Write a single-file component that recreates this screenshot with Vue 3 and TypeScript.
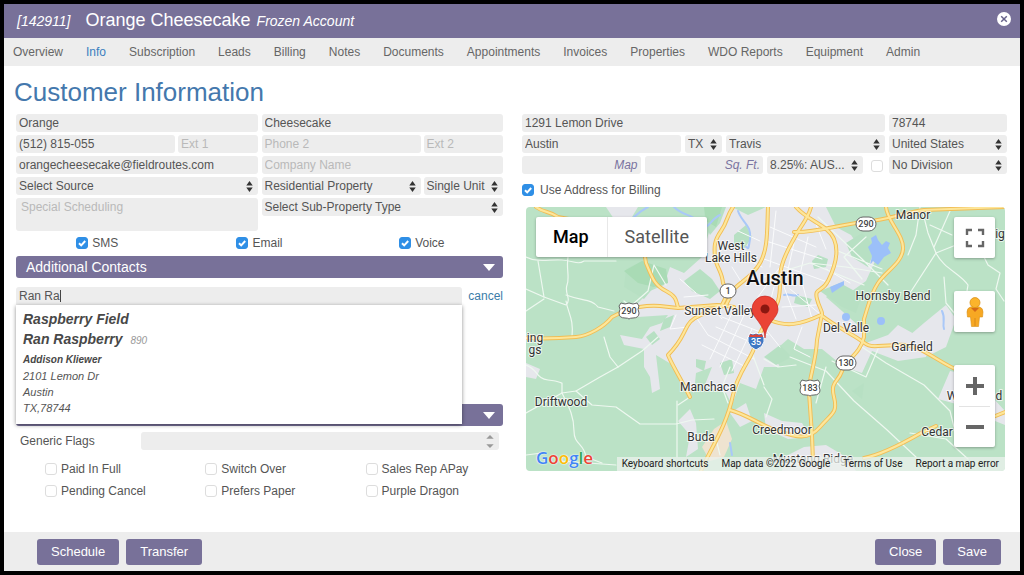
<script setup lang="ts">
import { ref } from 'vue'

interface Flag {
  id: string
  label: string
  checked: boolean
}

interface MapLabel {
  text: string
  x: number
  y: number
}

interface Shield {
  text: string
  x: number
  y: number
  kind: 'us' | 'state'
}

const tabs: string[] = [
  'Overview', 'Info', 'Subscription', 'Leads', 'Billing', 'Notes', 'Documents',
  'Appointments', 'Invoices', 'Properties', 'WDO Reports', 'Equipment', 'Admin',
]
const activeTab = ref('Info')

const channels = ref<Flag[]>([
  { id: 'sms', label: 'SMS', checked: true },
  { id: 'email', label: 'Email', checked: true },
  { id: 'voice', label: 'Voice', checked: true },
])

const flags = ref<Flag[]>([
  { id: 'paid', label: 'Paid In Full', checked: false },
  { id: 'switch', label: 'Switch Over', checked: false },
  { id: 'apay', label: 'Sales Rep APay', checked: false },
  { id: 'pending', label: 'Pending Cancel', checked: false },
  { id: 'paper', label: 'Prefers Paper', checked: false },
  { id: 'dragon', label: 'Purple Dragon', checked: false },
])

const search = ref('Ran Ra')
const taxable = ref(false)
const billing = ref(true)

const urban: string[] = [
  'M144 60 L158 66 L176 50 L190 0 L206 0 L222 8 L240 0 L300 0 L310 20 L325 28 L336 44 L350 52 L340 74 L326 84 L312 78 L300 90 L316 104 L334 120 L340 136 L362 128 L372 118 L390 128 L404 134 L400 150 L372 154 L346 144 L336 166 L318 160 L296 142 L278 142 L262 132 L246 146 L254 160 L238 160 L230 182 L214 176 L206 198 L200 186 L178 180 L186 160 L170 166 L168 186 L158 176 L150 160 L130 148 L134 182 L126 186 L124 170 L118 160 L118 142 L98 138 L94 128 L116 132 L124 120 L136 116 L142 108 L112 110 L108 100 L124 84 L138 78 Z',
  'M0 156 L14 162 L10 172 L0 170 Z',
  'M424 164 L446 168 L479 204 L479 218 L454 208 L434 198 L412 192 Z',
  'M384 128 L398 116 L420 98 L430 112 L420 140 L404 148 L376 152 Z',
  'M152 214 L164 202 L170 216 L172 242 L160 250 L164 228 Z',
  'M238 206 L256 214 L276 216 L284 230 L262 232 L240 222 Z',
  'M258 250 L278 240 L300 238 L320 250 L330 264 L256 264 Z',
  'M204 206 L220 196 L226 214 L214 220 Z',
  'M80 0 L112 0 L106 10 L88 12 Z',
]

const parks: string[] = [
  'M100 62 L116 54 L140 62 L142 76 L128 80 L118 92 L98 80 Z',
  'M158 74 L174 62 L186 72 L194 84 L184 92 L166 84 Z',
  'M178 0 L200 0 L194 16 L184 28 L178 14 Z',
  'M208 28 L220 18 L226 30 L218 42 L208 40 Z',
  'M320 36 L336 26 L350 40 L342 60 L326 50 Z',
  'M294 84 L314 76 L336 88 L330 106 L316 100 Z',
  'M120 130 L128 124 L134 132 L126 138 Z',
  'M170 152 L180 154 L178 164 L170 160 Z',
  'M194 156 L206 152 L208 166 L198 168 Z',
  'M238 150 L254 138 L266 150 L250 158 Z',
  'M270 88 L286 92 L282 100 L268 96 Z',
  'M138 112 L148 108 L144 120 L134 124 Z',
  'M286 54 L292 48 L302 52 L300 60 L288 62 Z',
  'M326 184 L338 176 L336 192 Z',
]

const water: string[] = [
  'M342 40 L346 36 L345 31 L350 28 L352 33 L356 38 L360 34 L364 36 L362 41 L365 46 L358 50 L352 58 L347 54 L344 58 L346 49 Z',
  'M316 110 a4 4 0 1 0 8 0 a4 4 0 1 0 -8 0',
  'M351 114 a4 4 0 1 0 8 0 a4 4 0 1 0 -8 0',
  'M304 80 L318 74 L318 78 L306 86 Z',
]

const rivers: string[] = [
  'M108 10 C114 4 118 2 122 0',
  'M148 0 C158 10 166 6 174 16 S184 12 194 8',
  'M212 4 C216 16 226 18 224 32 S222 40 220 40',
  'M258 88 C264 86 266 90 272 88',
  'M416 104 C420 112 416 116 418 122',
  'M204 236 L206 248',
]

const minor: string[] = [
  'M0 50 C12 56 24 52 36 53 S52 58 58 54 L90 54',
  'M42 50 C40 62 44 70 41 78 S46 92 40 98 L18 90 L0 82',
  'M18 90 L12 54', 'M40 88 C56 94 66 92 72 100 L88 104',
  'M40 94 C42 106 48 112 46 130', 'M0 104 L18 92',
  'M0 158 C12 162 10 172 22 173 S34 176 36 176 L36 186 L0 206',
  'M36 186 L50 184 L74 170 L92 160 L116 144 L132 130',
  'M78 130 L84 150 L92 160', 'M50 184 L66 198 L90 200 L114 217 L150 217 L166 213 L188 212',
  'M36 186 C44 202 48 210 48 224 S58 236 60 250 L76 256',
  'M151 194 L151 250', 'M164 190 L152 198', 'M168 230 L190 232 L194 248',
  'M106 98 L122 84 L128 58 L140 78', 'M98 94 L112 106',
  'M0 248 L16 246 M34 254 L90 258',
  'M394 0 L390 28 L382 48 M396 2 L402 26 L410 46 L384 86',
  'M410 46 C418 62 434 66 442 78 L440 90', 'M404 18 L426 28 M410 46 L430 38',
  'M424 4 L408 40', 'M454 42 L462 58 L474 66 L470 82 L478 94',
  'M238 70 L284 56 L320 60 L356 66 M284 56 L338 78',
  'M292 10 L336 52 L362 78 M312 44 L356 62', 'M340 30 L318 50 L336 72',
  'M336 140 L360 156 L398 178 L424 204 L428 220',
  'M264 150 L300 164 L328 194 L360 222 L390 250', 'M352 142 L340 170 L306 154',
  'M300 160 L290 196', 'M238 152 L252 160 L270 158 M238 180 L246 192 L240 210',
  'M226 146 L238 178 M204 160 L196 180 L202 196',
  'M384 226 L420 232 L442 252', 'M418 70 L420 96 L440 120',
]

const streets: string[] = [
  'M196 110 L242 128', 'M190 120 L236 140', 'M182 128 L228 152', 'M176 138 L220 160',
  'M206 106 L184 152', 'M218 108 L194 160', 'M226 122 L206 164',
  'M244 20 L290 40', 'M240 34 L296 52', 'M238 52 L304 76', 'M250 4 L244 60',
  'M268 36 L258 80 L270 112', 'M282 30 L274 68 L286 112', 'M256 100 L290 98',
  'M232 90 L254 60', 'M216 50 L236 60', 'M206 60 L216 76 L196 96', 'M212 24 L234 34',
  'M158 90 L182 88 M154 72 L170 86', 'M288 12 L300 42', 'M300 62 L324 76',
  'M264 82 L300 112', 'M248 80 L238 120 L254 140', 'M276 120 L268 142 L284 150',
  'M150 108 L144 122 L162 120', 'M166 104 L182 128 M186 100 L196 112',
]

const highways: string[] = [
  'M10 0 C18 6 24 4 32 10 L96 22 L118 44 L120 56 C126 70 128 78 140 84 S150 96 152 100',
  'M0 131 C20 132 38 131 50 130 S78 120 86 110 L98 104 C110 100 122 98 134 99 L152 101 L191 98 L208 100',
  'M193 98 C180 108 168 108 162 118 S156 134 142 148 C146 158 154 170 164 190',
  'M207 0 C200 10 202 14 195 24 S188 40 189 50 S196 64 197 76 L202 86 L196 98',
  'M242 0 C241 24 242 42 234 56 S218 72 208 82 L200 98 L184 104',
  'M268 25 C290 26 310 18 338 15 S376 6 398 3 L479 0',
  'M270 0 C282 14 302 18 308 32 S308 62 302 74 S288 80 291 92 S298 104 295 112 L291 133 C290 156 282 174 283 185 L286 228 L287 256',
  'M360 0 C361 14 378 28 377 42 S360 64 352 76 S342 100 338 112 L338 130 C334 148 320 152 316 164 S304 174 308 190 S306 206 294 220 S270 230 252 224 S222 208 204 203',
  'M244 113 C260 120 274 118 295 108 C308 118 320 124 328 129 C340 136 340 140 352 139 L372 138 C394 136 412 156 434 164',
  'M338 251 C354 248 374 238 395 226 L410 219', 'M462 212 L479 205',
  'M285 0 C282 12 274 20 270 28 S260 44 256 58 S256 80 252 94 S234 120 230 136 S212 164 207 188 S192 230 181 251 L175 264',
]

const labels: MapLabel[] = [
  { text: 'Manor', x: 387, y: 12 },
  { text: 'West', x: 205, y: 43 },
  { text: 'Lake Hills', x: 205, y: 55 },
  { text: 'Hornsby Bend', x: 367, y: 93 },
  { text: 'Sunset Valley', x: 194, y: 108 },
  { text: 'Del Valle', x: 320, y: 125 },
  { text: 'Garfield', x: 386, y: 144 },
  { text: 'Manchaca', x: 182, y: 184 },
  { text: 'Driftwood', x: 35, y: 199 },
  { text: 'Creedmoor', x: 256, y: 227 },
  { text: 'Buda', x: 175, y: 234 },
  { text: 'Cedar', x: 411, y: 229 },
  { text: 'Mustang Ridge', x: 287, y: 256 },
  { text: 'ing', x: 9, y: 135 },
  { text: 'gs', x: 9, y: 147 },
  { text: 'ig', x: 474, y: 31 },
  { text: 'W', x: 426, y: 193 },
  { text: 'd', x: 473, y: 193 },
]

const shields: Shield[] = [
  { text: '290', x: 103, y: 104, kind: 'us' },
  { text: '183', x: 284, y: 181, kind: 'us' },
  { text: '290', x: 340, y: 17, kind: 'state' },
  { text: '130', x: 320, y: 156, kind: 'state' },
  { text: '1', x: 202, y: 84, kind: 'state' },
]

const arrows = 'M0 5 L3.5 0 L7 5 Z M0 7 L3.5 12 L7 7 Z'
</script>

<template>
  <div class="window">
    <header class="title-bar">
      <span class="account">[142911]</span>
      <span class="name">Orange Cheesecake</span>
      <span class="account status">Frozen Account</span>
      <button class="close" type="button" aria-label="Close window">
        <svg viewBox="0 0 14 14" width="14" height="14">
          <circle cx="7" cy="7" r="7" fill="#fff" />
          <path d="M4.2 4.2 L9.8 9.8 M9.8 4.2 L4.2 9.8" stroke="#66628a" stroke-width="1.5" />
        </svg>
      </button>
    </header>

    <nav class="tabs">
      <a
        v-for="tab in tabs" :key="tab" href="#" :class="{ active: tab === activeTab }"
        @click.prevent="activeTab = tab"
      >{{ tab }}</a>
    </nav>

    <main class="content">
      <h1>Customer Information</h1>
      <div class="columns">
        <section class="customer">
          <div class="halves">
            <div class="stack">
              <input class="field" aria-label="First name" value="Orange">
              <div class="phone">
                <input class="field" aria-label="Phone 1" value="(512) 815-055">
                <input class="field" aria-label="Extension 1" placeholder="Ext 1">
              </div>
              <input class="field" aria-label="Email address" value="orangecheesecake@fieldroutes.com">
              <div class="pick">
                <select class="field" aria-label="Source"><option>Select Source</option></select>
                <svg class="arrows" viewBox="0 0 7 12"><path :d="arrows" /></svg>
              </div>
              <textarea class="field notes" aria-label="Special scheduling" placeholder="Special Scheduling"></textarea>
            </div>
            <div class="stack">
              <input class="field" aria-label="Last name" value="Cheesecake">
              <div class="phone">
                <input class="field" aria-label="Phone 2" placeholder="Phone 2">
                <input class="field" aria-label="Extension 2" placeholder="Ext 2">
              </div>
              <input class="field" aria-label="Company name" placeholder="Company Name">
              <div class="phone">
                <div class="pick">
                  <select class="field" aria-label="Property type"><option>Residential Property</option></select>
                  <svg class="arrows" viewBox="0 0 7 12"><path :d="arrows" /></svg>
                </div>
                <div class="pick">
                  <select class="field" aria-label="Units"><option>Single Unit</option></select>
                  <svg class="arrows" viewBox="0 0 7 12"><path :d="arrows" /></svg>
                </div>
              </div>
              <div class="pick">
                <select class="field" aria-label="Sub-property type"><option>Select Sub-Property Type</option></select>
                <svg class="arrows" viewBox="0 0 7 12"><path :d="arrows" /></svg>
              </div>
            </div>
          </div>

          <div class="channels">
            <label v-for="channel in channels" :key="channel.id" class="tick">
              <span class="box">
                <input v-model="channel.checked" type="checkbox">
                <svg viewBox="0 0 12 12"><path d="M3 6.2 L5.2 8.4 L9.2 4" /></svg>
              </span>
              {{ channel.label }}
            </label>
          </div>

          <button class="bar" type="button">
            Additional Contacts
            <svg viewBox="0 0 12 7" width="12" height="7"><path d="M0 0 H12 L6 7 Z" fill="#fff" /></svg>
          </button>

          <div class="contacts">
            <div class="search-row">
              <div class="search">
                <input v-model="search" class="field" aria-label="Search contacts">
                <span class="caret"></span>
                <a href="#" class="result" @click.prevent>
                  <strong>Raspberry Field</strong>
                  <strong>Ran Raspberry <small>890</small></strong>
                  <b>Addison Kliewer</b>
                  <span>2101 Lemon Dr</span>
                  <span>Austin</span>
                  <span>TX,78744</span>
                </a>
              </div>
              <a href="#" class="cancel" @click.prevent>cancel</a>
            </div>
          </div>

          <button class="bar" type="button" aria-label="Flags">
            <span></span>
            <svg viewBox="0 0 12 7" width="12" height="7"><path d="M0 0 H12 L6 7 Z" fill="#fff" /></svg>
          </button>

          <div class="generic">
            <label for="generic-flags">Generic Flags</label>
            <div class="pick">
              <select id="generic-flags" class="field"><option></option></select>
              <svg class="arrows pale" viewBox="0 0 8 14"><path d="M0 4 L4 0 L8 4 Z M0 10 L4 14 L8 10 Z" /></svg>
            </div>
          </div>

          <div class="flags">
            <label v-for="flag in flags" :key="flag.id" class="tick">
              <span class="box">
                <input v-model="flag.checked" type="checkbox">
                <svg viewBox="0 0 12 12"><path d="M3 6.2 L5.2 8.4 L9.2 4" /></svg>
              </span>
              {{ flag.label }}
            </label>
          </div>
        </section>

        <section class="address">
          <div class="stack">
            <div class="line street">
              <input class="field" aria-label="Street" value="1291 Lemon Drive">
              <input class="field" aria-label="Zip" value="78744">
            </div>
            <div class="line city">
              <input class="field" aria-label="City" value="Austin">
              <div class="pick">
                <select class="field" aria-label="State"><option>TX</option></select>
                <svg class="arrows" viewBox="0 0 7 12"><path :d="arrows" /></svg>
              </div>
              <div class="pick">
                <select class="field" aria-label="County"><option>Travis</option></select>
                <svg class="arrows" viewBox="0 0 7 12"><path :d="arrows" /></svg>
              </div>
              <div class="pick">
                <select class="field" aria-label="Country"><option>United States</option></select>
                <svg class="arrows" viewBox="0 0 7 12"><path :d="arrows" /></svg>
              </div>
            </div>
            <div class="line lot">
              <input class="field hint" aria-label="Map code" placeholder="Map">
              <input class="field hint" aria-label="Square feet" placeholder="Sq. Ft.">
              <div class="pick">
                <select class="field" aria-label="Tax rate"><option>8.25%: AUS...</option></select>
                <svg class="arrows" viewBox="0 0 7 12"><path :d="arrows" /></svg>
              </div>
              <span class="box">
                <input v-model="taxable" type="checkbox" aria-label="Tax exempt">
                <svg viewBox="0 0 12 12"><path d="M3 6.2 L5.2 8.4 L9.2 4" /></svg>
              </span>
              <div class="pick">
                <select class="field" aria-label="Division"><option>No Division</option></select>
                <svg class="arrows" viewBox="0 0 7 12"><path :d="arrows" /></svg>
              </div>
            </div>
          </div>
          <label class="tick billing">
            <span class="box">
              <input v-model="billing" type="checkbox">
              <svg viewBox="0 0 12 12"><path d="M3 6.2 L5.2 8.4 L9.2 4" /></svg>
            </span>
            Use Address for Billing
          </label>

          <div class="map">
            <svg class="terrain" viewBox="0 0 479 264" preserveAspectRatio="xMidYMid slice">
              <rect width="479" height="264" fill="#bbe2c6" />
              <g fill="#e6e7ec"><path v-for="d in urban" :key="d" :d="d" /></g>
              <path d="M188 222 L200 214 L206 232 L198 250 L184 254 L176 240 Z" fill="#eee3d0" />
              <g fill="#b7e0c3"><path v-for="d in parks" :key="d" :d="d" /></g>
              <path d="M98 64 L116 54 L140 62 L142 76 L128 80 L112 76 Z M178 0 H196 L190 20 L180 14 Z" fill="#a9dbb5" />
              <g fill="#9cc0f9"><path v-for="d in water" :key="d" :d="d" /></g>
              <g class="strokes" stroke="#a9c8f8" stroke-width="2"><path v-for="d in rivers" :key="d" :d="d" /></g>
              <g class="strokes" stroke="#fafbfc" stroke-width="1"><path v-for="d in streets" :key="d" :d="d" /></g>
              <g class="strokes" stroke="#eef8f0" stroke-width="1.2"><path v-for="d in minor" :key="d" :d="d" /></g>
              <g class="strokes" stroke="#f1bd55" stroke-width="4"><path v-for="d in highways" :key="d" :d="d" /></g>
              <g class="strokes" stroke="#fde69a" stroke-width="2.2"><path v-for="d in highways" :key="d" :d="d" /></g>

              <g v-for="shield in shields" :key="shield.text + shield.x" :transform="`translate(${shield.x} ${shield.y})`">
                <path
                  v-if="shield.kind === 'us'"
                  d="M-8 -8 Q-4 -6 0 -8 Q4 -6 8 -8 L10 -5 Q8 -2 10 2 Q10 7 4 7 Q1 7 0 8 Q-1 7 -4 7 Q-10 7 -10 2 Q-8 -2 -10 -5 Z"
                  fill="#fff" stroke="#666"
                />
                <rect
                  v-else :x="shield.text.length > 1 ? -10 : -8" y="-7"
                  :width="shield.text.length > 1 ? 20 : 16" height="14" rx="7" fill="#fff" stroke="#666"
                />
                <text class="route" y="3">{{ shield.text }}</text>
              </g>

              <g class="places">
                <text v-for="label in labels" :key="label.text" :x="label.x" :y="label.y">{{ label.text }}</text>
                <text class="city-name" x="249" y="78">Austin</text>
              </g>

              <g transform="translate(230 134)">
                <path d="M-6 -8 Q-3 -6 0 -8 Q3 -6 6 -8 Q9 -3 8 1 Q7 6 0 9 Q-7 6 -8 1 Q-9 -3 -6 -8 Z" fill="#3f78c3" stroke="#fff" />
                <path d="M-6 -7 Q-3 -5 0 -7 Q3 -5 6 -7 L7 -4 H-7 Z" fill="#d8453b" />
                <text class="route light" y="4">35</text>
              </g>
              <path d="M239 131 C238 122 236 120 232 114 C228 109 226 106 226 102 A13 13 0 0 1 252 102 C252 106 250 109 246 114 C242 120 240 122 239 131 Z" fill="#ea4335" stroke="#c5221f" stroke-width="0.6" />
              <circle cx="239" cy="102" r="4.5" fill="#8a1710" />
            </svg>

            <div class="map-type">
              <button type="button" class="chosen">Map</button>
              <button type="button">Satellite</button>
            </div>
            <div class="map-tools">
              <button type="button" aria-label="Toggle fullscreen">
                <svg viewBox="0 0 20 20" width="20" height="20"><path d="M2 7 V2 H7 M13 2 H18 V7 M18 13 V18 H13 M7 18 H2 V13" fill="none" stroke="#666" stroke-width="2.4" /></svg>
              </button>
              <button type="button" aria-label="Street view">
                <svg viewBox="0 0 18 32" width="18" height="32">
                  <path d="M4.5 11 Q1 12 1 16 L1.5 21 H4.5 L5.5 30.5 H12.5 L13.5 21 H16.5 L17 16 Q17 12 13.5 11 Z" fill="#f7a823" stroke="#d9901a" stroke-width="0.6" />
                  <path d="M5 12 L9 16 L13 12 Z" fill="#d56a18" />
                  <path d="M9 22 V30" stroke="#d98a1a" />
                  <circle cx="9" cy="6.6" r="5" fill="#fbb42c" stroke="#d9901a" stroke-width="0.8" />
                </svg>
              </button>
              <div class="zoom">
                <button type="button" aria-label="Zoom in">
                  <svg viewBox="0 0 18 18" width="18" height="18"><path d="M0 9 H18 M9 0 V18" stroke="#666" stroke-width="4" /></svg>
                </button>
                <button type="button" aria-label="Zoom out">
                  <svg viewBox="0 0 18 18" width="18" height="18"><path d="M0 9 H18" stroke="#666" stroke-width="4" /></svg>
                </button>
              </div>
            </div>
            <a class="google" href="#" aria-label="Google"><span class="blue">G</span><span class="red">o</span><span class="yellow">o</span><span class="blue">g</span><span class="green">l</span><span class="red">e</span></a>
            <div class="credits">
              <button type="button">Keyboard shortcuts</button>
              <span>Map data ©2022 Google</span>
              <a href="#">Terms of Use</a>
              <a href="#">Report a map error</a>
            </div>
          </div>
        </section>
      </div>
    </main>

    <footer class="actions">
      <button type="button">Schedule</button>
      <button type="button">Transfer</button>
      <span class="spring"></span>
      <button type="button">Close</button>
      <button type="button">Save</button>
    </footer>
  </div>
</template>

<style>
body {
  background: #000;
}
</style>

<style scoped>
.window,
.window * {
  box-sizing: border-box;
}

.window {
  display: flex;
  flex-direction: column;
  min-height: 100vh;
  border: 4px solid #000;
  background: #fff;
  color: #555;
  font: 12px/18px "Liberation Sans", Arial, sans-serif;
}

button,
input,
select,
textarea {
  margin: 0;
  border: 0;
  font: inherit;
  color: inherit;
}

button {
  padding: 0;
  cursor: pointer;
}

a {
  color: inherit;
  text-decoration: none;
}

.title-bar {
  display: flex;
  align-items: baseline;
  padding: 0 9px 0 13px;
  background: #787199;
  color: #fff;
  line-height: 34px;
}

.account {
  font-size: 14px;
  font-style: italic;
}

.name {
  margin: 0 6px 0 15px;
  font-size: 18px;
  line-height: 32px;
}

.close {
  align-self: center;
  display: flex;
  margin: 0 0 4px auto;
  background: none;
}

.tabs {
  display: flex;
  gap: 23px;
  padding: 0 9px;
  background: #ededed;
  color: #666;
  line-height: 28px;
}

.tabs .active {
  color: #3c7fbf;
}

.content {
  flex: 1;
  padding: 11px 13px 0 12px;
}

h1 {
  margin: 0 0 7px -2px;
  color: #4478ad;
  font-size: 26px;
  font-weight: 400;
  line-height: 30px;
}

.columns {
  display: grid;
  grid-template-columns: 487fr 485fr;
  gap: 19px;
}

.stack {
  display: grid;
  align-content: start;
  gap: 3px;
}

.halves {
  display: grid;
  grid-template-columns: 1fr 1fr;
  gap: 4px;
}

.phone {
  display: grid;
  grid-template-columns: 2fr 1fr;
  gap: 3px;
}

.field {
  display: block;
  width: 100%;
  min-width: 0;
  height: 18px;
  padding: 0 3px;
  border-radius: 3px;
  outline: 0;
  background: #ededed;
  line-height: 18px;
  appearance: none;
}

.field::placeholder {
  color: #b9b9b9;
  opacity: 1;
}

.notes {
  height: 33px;
  padding: 0 5px;
  resize: none;
}

.hint {
  text-align: right;
}

.hint::placeholder {
  color: #7a74a0;
  font-style: italic;
}

.pick {
  position: relative;
  min-width: 0;
}

.arrows {
  position: absolute;
  top: 4px;
  right: 5px;
  width: 7px;
  height: 11px;
  fill: #333;
  pointer-events: none;
}

.pale {
  top: 3px;
  width: 8px;
  height: 13px;
  fill: #999;
}

.tick {
  display: flex;
  align-items: center;
  gap: 4px;
}

.box {
  position: relative;
  flex: none;
  width: 12px;
  height: 12px;
}

.box input {
  display: block;
  width: 12px;
  height: 12px;
  border: 1px solid #ddd;
  border-radius: 3px;
  background: #fff;
  appearance: none;
}

.box input:checked {
  border-color: #2f8fe6;
  background: #2f8fe6;
}

.box svg {
  position: absolute;
  inset: 0;
  fill: none;
  stroke: #fff;
  stroke-width: 2;
  pointer-events: none;
}

.channels {
  display: grid;
  grid-template-columns: repeat(3, 1fr);
  justify-items: center;
  margin: 3px 0 4px;
}

.bar {
  display: flex;
  align-items: center;
  justify-content: space-between;
  width: 100%;
  height: 22px;
  padding: 0 8px 0 10px;
  border-radius: 3px;
  background: #787199;
  color: #fff;
  font-size: 14px;
}

.contacts {
  min-height: 126px;
  padding-top: 9px;
}

.search-row {
  display: flex;
  gap: 6px;
}

.search {
  position: relative;
  flex: 1;
}

.search .field {
  border-radius: 3px 3px 0 0;
  caret-color: transparent;
}

.caret {
  position: absolute;
  top: 3px;
  left: 44px;
  width: 1px;
  height: 12px;
  background: #444;
}

.result {
  position: absolute;
  z-index: 1;
  top: 18px;
  left: 0;
  display: flex;
  flex-direction: column;
  width: 100%;
  padding: 4px 7px;
  background: #fff;
  box-shadow: 0 1px 4px rgba(0, 0, 0, 0.45);
  font-size: 11px;
  font-style: italic;
  line-height: 16px;
}

.result span:last-child {
  padding-bottom: 4px;
}

.result strong {
  height: 20px;
  color: #484848;
  font-size: 14px;
  line-height: 20px;
}

.result small {
  margin-left: 4px;
  color: #999;
  font-size: 10px;
  font-weight: 400;
}

.result b {
  margin-top: 3px;
  color: #484848;
  font-size: 10px;
}

.cancel {
  color: #3b7ca8;
}

.generic {
  display: grid;
  grid-template-columns: 121px 1fr;
  padding: 6px 4px 10px;
}

.flags {
  display: grid;
  grid-template-columns: 35% 35% 1fr;
  row-gap: 4px;
  padding-left: 29px;
}

.line {
  display: grid;
  gap: 4px;
}

.street {
  grid-template-columns: 1fr 118px;
}

.city {
  grid-template-columns: 1fr 37px 1fr 118px;
}

.lot {
  grid-template-columns: 1fr 1fr 96px 18px 118px;
}

.lot .box {
  margin: 4px 0 0 4px;
}

.billing {
  gap: 6px;
  margin: 7px 0 8px;
}

.map {
  position: relative;
  height: 264px;
  margin: 0 2px 0 4px;
  overflow: hidden;
  border-radius: 4px;
  font-family: Roboto, sans-serif;
}

.terrain {
  display: block;
  width: 100%;
  height: 100%;
}

.strokes {
  fill: none;
  stroke-linecap: round;
  stroke-linejoin: round;
}

.places text {
  fill: #333;
  stroke: #fff;
  stroke-width: 2px;
  stroke-opacity: 0.7;
  paint-order: stroke;
  font-size: 12px;
  text-anchor: middle;
}

.places .city-name {
  fill: #111;
  font-size: 20px;
  font-weight: 500;
}

.route {
  fill: #444;
  font-size: 9px;
  font-weight: 500;
  text-anchor: middle;
}

.light {
  fill: #fff;
}

.map-type {
  position: absolute;
  top: 10px;
  left: 10px;
  display: flex;
  border-radius: 2px;
  background: #fff;
  box-shadow: 0 1px 3px rgba(0, 0, 0, 0.3);
}

.map-type button {
  padding: 0 18px 0 17px;
  background: none;
  color: #565656;
  font-size: 18px;
  line-height: 40px;
}

.map-type .chosen {
  border-right: 1px solid #e8e8e8;
  color: #000;
  font-weight: 500;
}

.map-tools {
  position: absolute;
  top: 10px;
  right: 10px;
  display: grid;
  gap: 33px;
}

.map-tools > button,
.zoom {
  width: 41px;
  border-radius: 2px;
  background: #fff;
  box-shadow: 0 1px 3px rgba(0, 0, 0, 0.3);
}

.map-tools button {
  display: flex;
  align-items: center;
  justify-content: center;
  height: 41px;
}

.zoom {
  padding: 0 5px;
}

.zoom button {
  width: 100%;
  background: none;
}

.zoom button + button {
  border-top: 1px solid #e3e3e3;
}

.google {
  position: absolute;
  bottom: 1px;
  left: 10px;
  font: 600 17px/24px "Open Sans", sans-serif;
  text-shadow: 0 0 2px #fff, 0 0 1px #fff;
}

.blue {
  color: #4285f4;
}

.red {
  color: #ea4335;
}

.yellow {
  color: #fbbc05;
}

.green {
  color: #34a853;
}

.credits {
  position: absolute;
  right: 0;
  bottom: 0;
  display: flex;
  gap: 13px;
  padding: 0 6px 0 5px;
  background: rgba(236, 242, 238, 0.75);
  color: #222;
  font-size: 10px;
  line-height: 14px;
  white-space: nowrap;
}

.credits button {
  background: none;
}

.actions {
  display: flex;
  gap: 7px;
  padding: 7px 19px 6px 33px;
  background: #ededed;
}

.actions button {
  padding: 0 14px;
  border-radius: 3px;
  background: #787199;
  color: #fff;
  font-size: 13px;
  line-height: 26px;
}

.spring {
  flex: 1;
}
</style>
